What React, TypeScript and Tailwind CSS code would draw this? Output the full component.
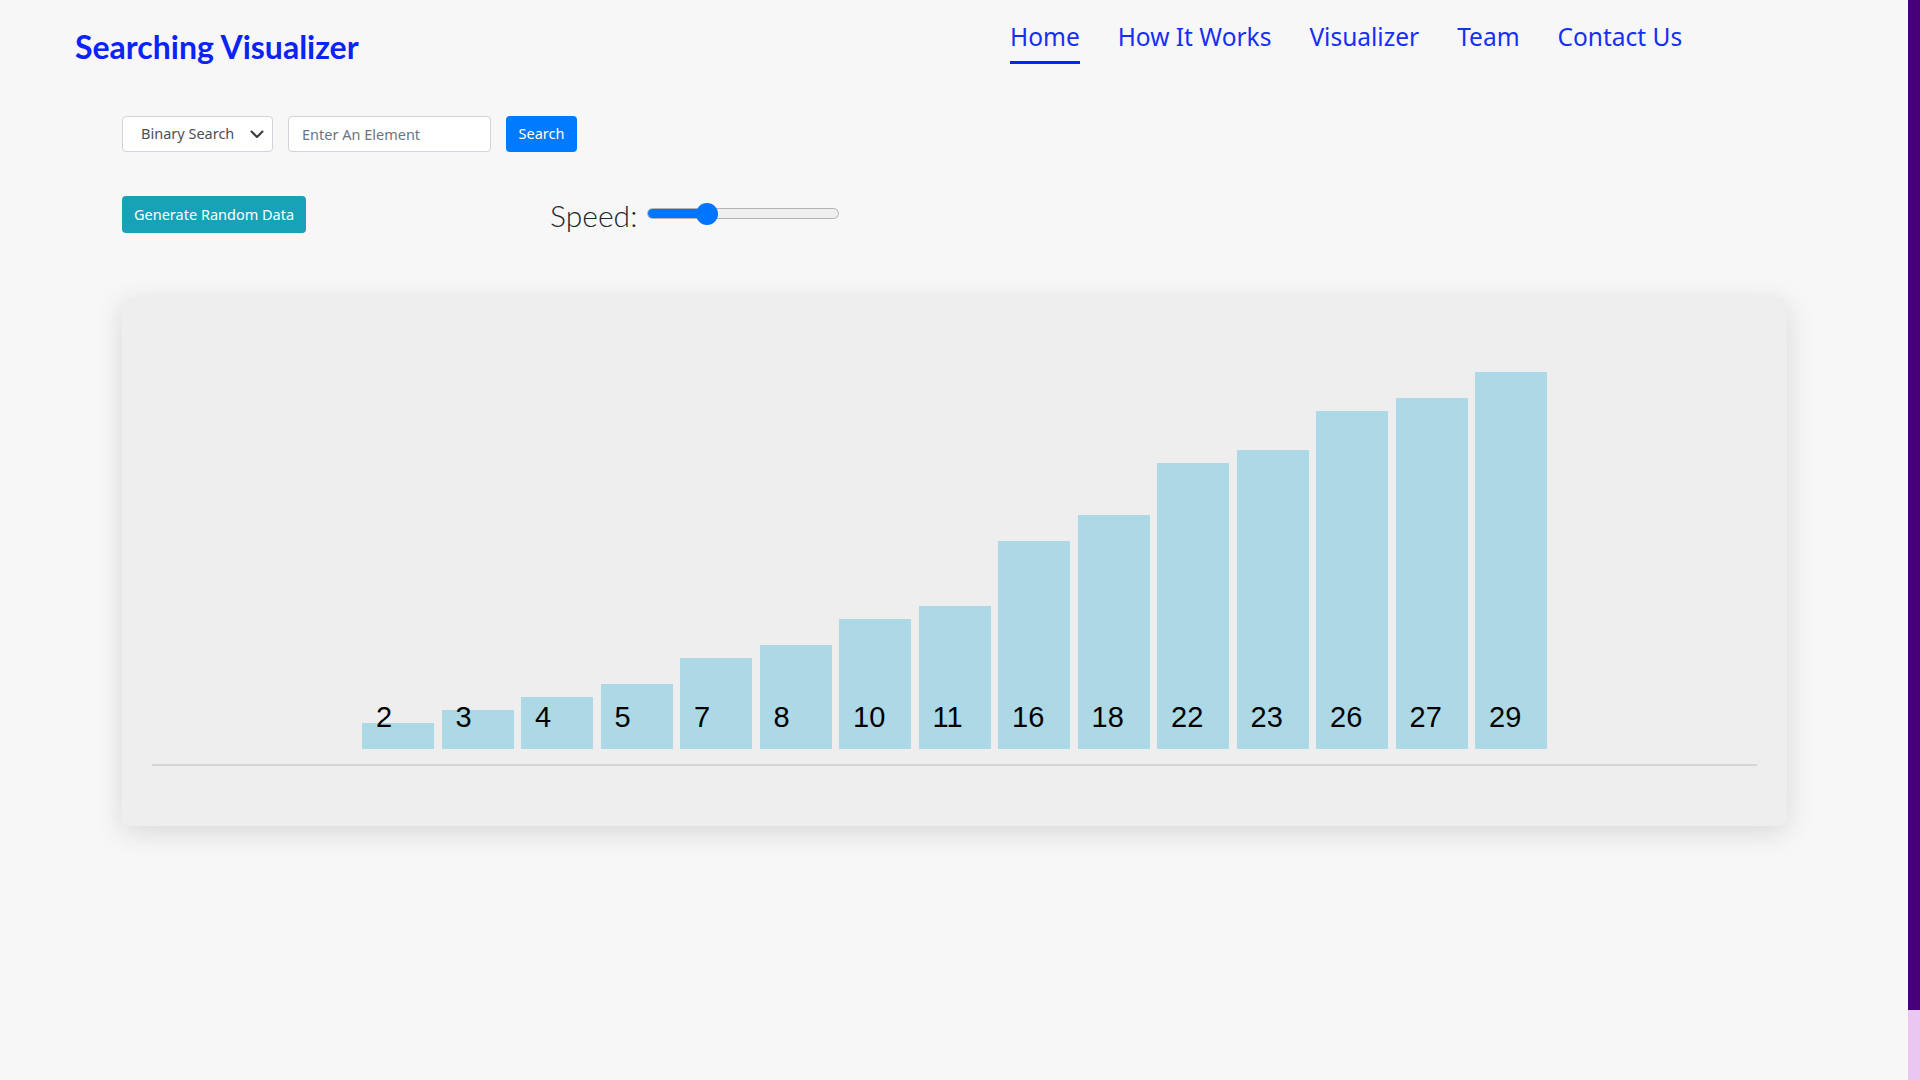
const DATA = [2, 3, 4, 5, 7, 8, 10, 11, 16, 18, 22, 23, 26, 27, 29];
const NAV = ['Home', 'How It Works', 'Visualizer', 'Team', 'Contact Us'];

function Bar({ value }: { value: number }) {
  return (
    <div className="relative w-[72px] shrink-0 bg-[#add8e6]" style={{ height: value * 13 }}>
      <span className="absolute bottom-[17px] left-[14px] font-['Liberation_Sans',Arial,sans-serif] text-[29px] leading-[29px] text-black">
        {value}
      </span>
    </div>
  );
}

function SpeedSlider() {
  // drawn like chrome's default range input
  return (
    <div className="relative ml-[10px] flex h-[22px] w-[192px] items-center">
      <div className="flex h-[11px] w-full overflow-hidden rounded-full border border-[#b2b2b2] bg-[#efefef]">
        <div className="h-full w-[60px] bg-[#0075ff]" />
      </div>
      <div className="absolute left-[49px] top-0 h-[22px] w-[22px] rounded-full bg-[#0075ff]" />
    </div>
  );
}

export default function App() {
  return (
    <div className="flex h-screen w-full overflow-hidden bg-[#f7f7f7] font-['Noto_Sans',sans-serif]">
      <main className="flex-1">
        <header className="flex items-start pt-[21px]">
          <div className="w-[1010px] pl-[75px] pt-[7px] font-['Lato',sans-serif] text-[32px] font-bold leading-[38px] text-[#0b24f5]">
            Searching Visualizer
          </div>
          <nav className="flex gap-[38px]">
            {NAV.map((n, i) => (
              <a
                key={n}
                href="#"
                className={
                  i === 0
                    ? 'border-b-[3px] border-[#0b24f5] pb-2 text-[24.5px] leading-[32px] text-[#1530f2]'
                    : 'border-b-[3px] border-transparent pb-2 text-[24.5px] leading-[32px] text-[#1530f2]'
                }
              >
                {n}
              </a>
            ))}
          </nav>
        </header>

        <section className="mt-[50px] pl-[122px]">
          <div className="flex items-center gap-[15px]">
            <div className="flex h-[36px] w-[151px] items-center justify-between rounded-[4px] border border-[#ced4da] bg-white pl-[18px] pr-[8px] text-[14.5px] text-[#495057]">
              <span>Binary Search</span>
              <svg width="14" height="9" viewBox="0 0 14 9" fill="none">
                <path d="M1.5 1.5 7 7l5.5-5.5" stroke="#343a40" strokeWidth="2" strokeLinecap="round" strokeLinejoin="round" />
              </svg>
            </div>
            <input
              placeholder="Enter An Element"
              className="h-[36px] w-[203px] rounded-[4px] border border-[#ced4da] bg-white px-[13px] text-[14.5px] text-[#495057] outline-none placeholder:text-[#6c757d]"
            />
            <button className="h-[36px] w-[71px] rounded-[4px] bg-[#007bff] text-[14.5px] text-white">Search</button>
          </div>

          <div className="mt-[44px] flex items-center">
            <button className="h-[37px] rounded-[4px] bg-[#17a2b8] px-3 text-[14.5px] text-white">Generate Random Data</button>
            <span className="ml-[244px] font-['Lato',sans-serif] text-[30px] font-light leading-[34px] text-[#212529]">Speed:</span>
            <div className="-mt-[2px]">
              <SpeedSlider />
            </div>
          </div>
        </section>

        <div className="ml-[122px] mt-[65px] flex w-[1665px] flex-col rounded-lg bg-[#eeeeee] px-[30px] pb-[60px] shadow-[0_6px_28px_rgba(0,0,0,0.13)]">
          <div className="flex h-[451px] items-end justify-center gap-[7.5px]">
            {DATA.map((v) => (
              <Bar key={v} value={v} />
            ))}
          </div>
          <div className="mt-[15px] h-[2px] bg-[#d6d6d6]" />
        </div>
      </main>

      <aside className="flex w-[12px] flex-col">
        <div className="h-[1010px] bg-[#45007a]" />
        <div className="flex-1 bg-[#eac7f2]" />
      </aside>
    </div>
  );
}
